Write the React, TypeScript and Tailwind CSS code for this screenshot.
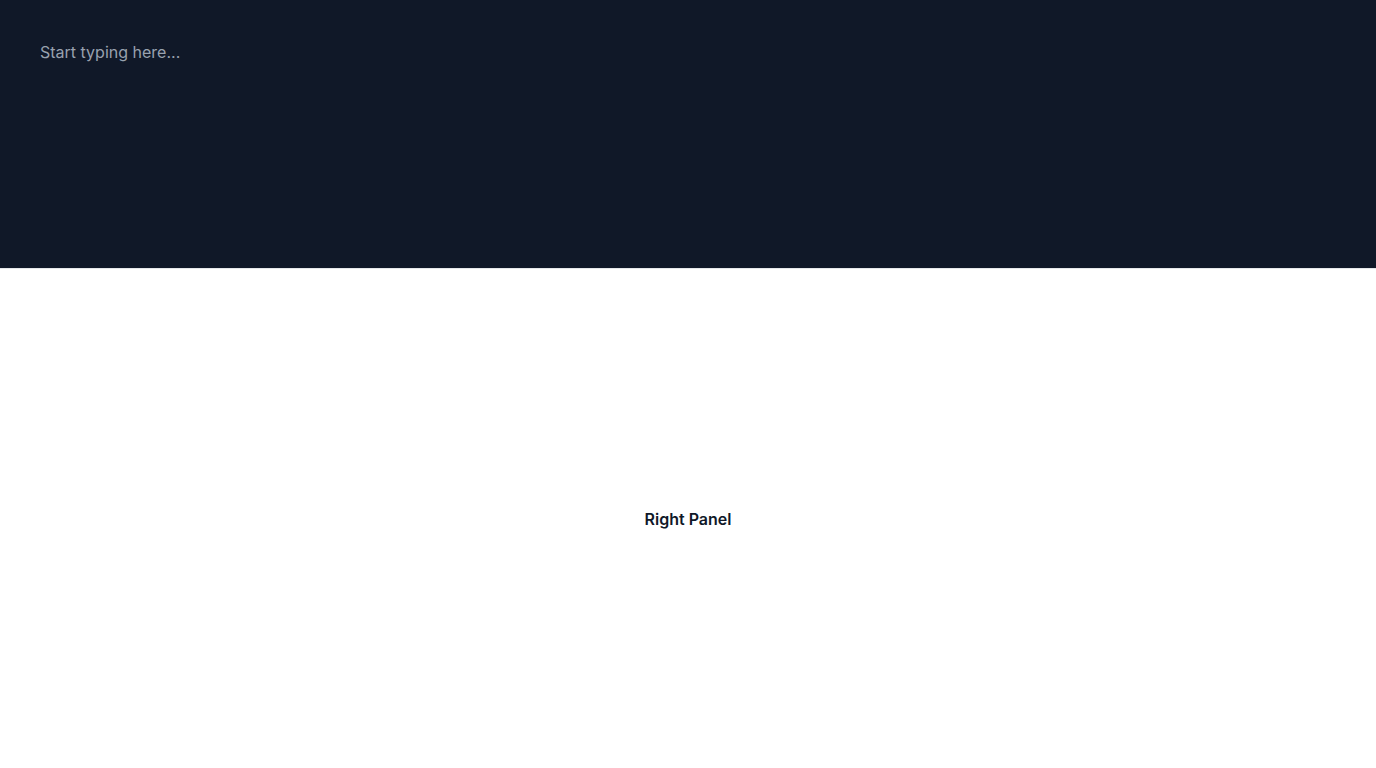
export default function App() {
  return (
    <div className="flex h-screen w-full flex-col bg-white" style={{ fontFamily: 'Inter, "Noto Sans", sans-serif' }}>
      {/* Top editor pane */}
      <div className="h-[268px] shrink-0 bg-gray-900">
        <textarea
          className="h-full w-full resize-none bg-transparent p-10 text-base text-gray-100 placeholder-gray-400 outline-none"
          placeholder="Start typing here..."
        />
      </div>
      <div className="h-px shrink-0 bg-gray-200" />
      {/* Bottom pane */}
      <div className="flex flex-1 items-center justify-center">
        <span className="text-base font-semibold text-gray-900">Right Panel</span>
      </div>
    </div>
  )
}
